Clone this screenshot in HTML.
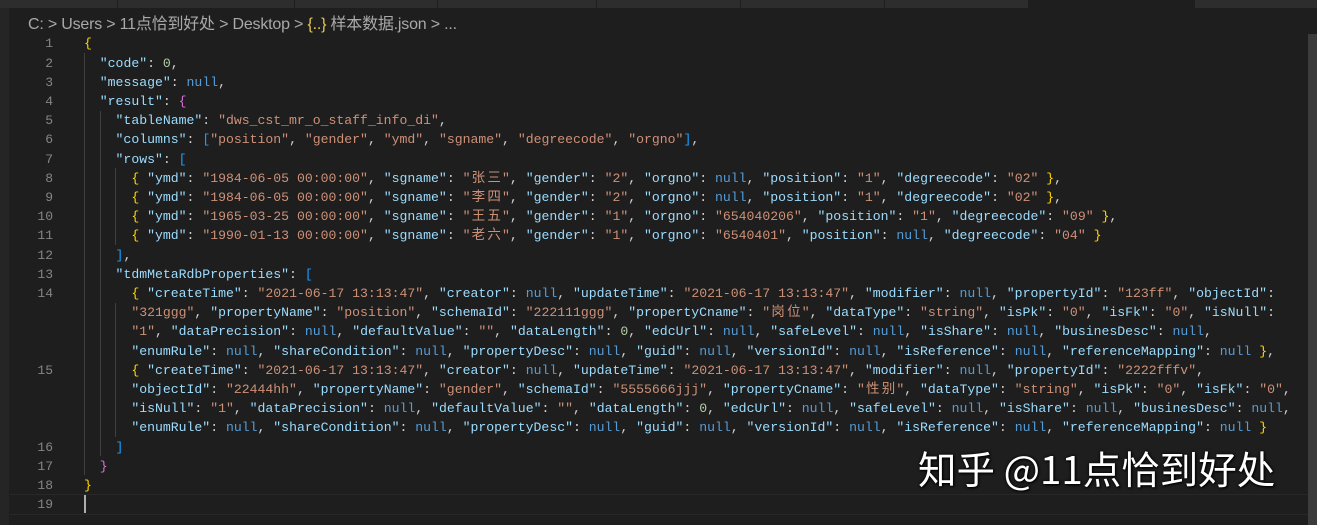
<!DOCTYPE html>
<html><head><meta charset="utf-8">
<style>
html,body{margin:0;padding:0;background:#1e1e1e;width:1317px;height:525px;overflow:hidden;position:relative}
.tabs{position:absolute;left:0;top:0;width:1317px;height:8px;background:#2d2d2d}
.tabs i{position:absolute;top:0;width:1px;height:8px;background:#1e1e1e}
.act{position:absolute;top:0;left:1028px;width:167px;height:8px;background:#1e1e1e}
.side{position:absolute;left:0;top:8px;width:9px;height:517px;background:#252526}
.bc{position:absolute;left:28px;top:10px;font:16px "Liberation Sans","Noto Sans CJK SC",sans-serif;color:#a9a9a9;white-space:pre;letter-spacing:-0.2px}
.bc b{font-weight:normal;color:#e8c94b}
.ln{position:absolute;left:10px;width:43px;text-align:right;font:13px "Liberation Mono",monospace;color:#858585;height:19.2px;line-height:19.2px}
.row{position:absolute;left:84px;font:13.15px "Liberation Mono","Noto Sans CJK SC",monospace;color:#d4d4d4;white-space:pre;height:19.2px;line-height:19.2px}
.c{display:inline-block;width:15.78px;text-align:center;font-size:13.5px}
.k{color:#9cdcfe}.s{color:#ce9178}.n{color:#569cd6}.d{color:#b5cea8}
.b0{color:#ffd700}.b1{color:#da70d6}.b2{color:#179fff}
.g{position:absolute;width:1px;background:#404040}
.cur{position:absolute;left:10px;top:494px;width:1298px;height:19px;border-top:1px solid #282828;border-bottom:1px solid #282828}
.caret{position:absolute;left:84px;top:495px;width:2px;height:18px;background:#aeafad}
.sb{position:absolute;left:1308px;top:34px;width:9px;height:491px;background:#3c3c3c}
.wm{position:absolute;left:918px;top:440px;font:38.5px "Noto Sans CJK SC",sans-serif;color:#fff;white-space:pre;text-shadow:0 0 3px #000,1px 1px 2px #000}
</style></head><body>
<div class="tabs"><i style="left:117px"></i><i style="left:294px"></i><i style="left:437px"></i><i style="left:596px"></i><i style="left:740px"></i><i style="left:884px"></i><i style="left:1028px"></i></div>
<div class="act"></div>
<div class="side"></div>
<div class="bc">C: &gt; Users &gt; 11点恰到好处 &gt; Desktop &gt; <b>{..}</b> 样本数据.json &gt; ...</div>
<div class="cur"></div>
<div class="g" style="left:84px;top:53px;height:422px"></div>
<div class="g" style="left:100px;top:111px;height:345px"></div>
<div class="g" style="left:115px;top:168px;height:77px"></div>
<div class="g" style="left:115px;top:303px;height:134px"></div>
<div class="sb"></div>
<div id="code"></div>
<div class="caret"></div>
<div class="wm">知乎 @11点恰到好处</div>
<script>
var rows=[
[1,'{'],
[2,'  "code": 0,'],
[3,'  "message": null,'],
[4,'  "result": {'],
[5,'    "tableName": "dws_cst_mr_o_staff_info_di",'],
[6,'    "columns": ["position", "gender", "ymd", "sgname", "degreecode", "orgno"],'],
[7,'    "rows": ['],
[8,'      { "ymd": "1984-06-05 00:00:00", "sgname": "张三", "gender": "2", "orgno": null, "position": "1", "degreecode": "02" },'],
[9,'      { "ymd": "1984-06-05 00:00:00", "sgname": "李四", "gender": "2", "orgno": null, "position": "1", "degreecode": "02" },'],
[10,'      { "ymd": "1965-03-25 00:00:00", "sgname": "王五", "gender": "1", "orgno": "654040206", "position": "1", "degreecode": "09" },'],
[11,'      { "ymd": "1990-01-13 00:00:00", "sgname": "老六", "gender": "1", "orgno": "6540401", "position": null, "degreecode": "04" }'],
[12,'    ],'],
[13,'    "tdmMetaRdbProperties": ['],
[14,'      { "createTime": "2021-06-17 13:13:47", "creator": null, "updateTime": "2021-06-17 13:13:47", "modifier": null, "propertyId": "123ff", "objectId":'],
[0,'      "321ggg", "propertyName": "position", "schemaId": "222111ggg", "propertyCname": "岗位", "dataType": "string", "isPk": "0", "isFk": "0", "isNull":'],
[0,'      "1", "dataPrecision": null, "defaultValue": "", "dataLength": 0, "edcUrl": null, "safeLevel": null, "isShare": null, "businesDesc": null,'],
[0,'      "enumRule": null, "shareCondition": null, "propertyDesc": null, "guid": null, "versionId": null, "isReference": null, "referenceMapping": null },'],
[15,'      { "createTime": "2021-06-17 13:13:47", "creator": null, "updateTime": "2021-06-17 13:13:47", "modifier": null, "propertyId": "2222fffv",'],
[0,'      "objectId": "22444hh", "propertyName": "gender", "schemaId": "5555666jjj", "propertyCname": "性别", "dataType": "string", "isPk": "0", "isFk": "0",'],
[0,'      "isNull": "1", "dataPrecision": null, "defaultValue": "", "dataLength": 0, "edcUrl": null, "safeLevel": null, "isShare": null, "businesDesc": null,'],
[0,'      "enumRule": null, "shareCondition": null, "propertyDesc": null, "guid": null, "versionId": null, "isReference": null, "referenceMapping": null }'],
[16,'    ]'],
[17,'  }'],
[18,'}'],
[19,'']
];
function esc(t){return t.replace(/&/g,'&amp;').replace(/</g,'&lt;').replace(/([\u4e00-\u9fff])/g,'<span class="c">$1</span>');}
var depth=0,h='';
rows.forEach(function(r,i){
  var top=(34.4+i*19.2).toFixed(1);
  if(r[0])h+='<div class="ln" style="top:'+top+'px">'+r[0]+'</div>';
  var s=r[1],o='',re=/("(?:[^"\\]|\\.)*")(\s*:)?|\bnull\b|-?\d+(?:\.\d+)?|[{}\[\]]|[^"{}\[\]\dn]+|./g,m;
  while((m=re.exec(s))){
    var t=m[0];
    if(m[1]){o+=(m[2]?'<span class="k">'+esc(m[1])+'</span>'+m[2]:'<span class="s">'+esc(t)+'</span>');}
    else if(t==='null')o+='<span class="n">null</span>';
    else if(/^-?\d/.test(t))o+='<span class="d">'+t+'</span>';
    else if(t==='{'||t==='['){o+='<span class="b'+(depth%3)+'">'+t+'</span>';depth++;}
    else if(t==='}'||t===']'){depth--;o+='<span class="b'+(depth%3)+'">'+t+'</span>';}
    else o+=esc(t);
  }
  h+='<div class="row" style="top:'+top+'px">'+o+'</div>';
});
document.getElementById('code').innerHTML=h;
</script>
</body></html>
